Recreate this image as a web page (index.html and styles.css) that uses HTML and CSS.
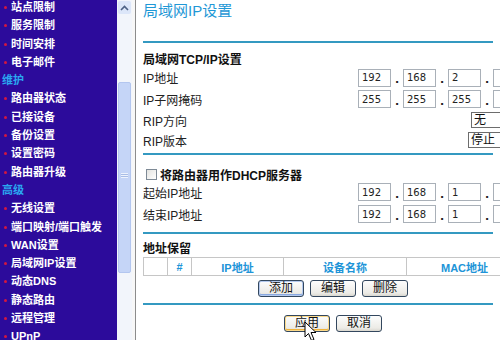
FILE: index.html
```html
<!DOCTYPE html>
<html lang="zh-CN">
  <head>
    <meta charset="UTF-8" />
    <title>局域网IP设置</title>
    <link rel="stylesheet" href="styles.css">
  </head>
  <body>
    <div class="frame">
      <div class="menu">
        <ul class="menu-list">
          <li class="item">站点限制</li>
          <li class="item">服务限制</li>
          <li class="item">时间安排</li>
          <li class="item">电子邮件</li>
          <li class="group">维护</li>
          <li class="item">路由器状态</li>
          <li class="item">已接设备</li>
          <li class="item">备份设置</li>
          <li class="item">设置密码</li>
          <li class="item">路由器升级</li>
          <li class="group">高级</li>
          <li class="item">无线设置</li>
          <li class="item">端口映射/端口触发</li>
          <li class="item">WAN设置</li>
          <li class="item">局域网IP设置</li>
          <li class="item">动态DNS</li>
          <li class="item">静态路由</li>
          <li class="item">远程管理</li>
          <li class="item">UPnP</li>
        </ul>
      </div>
      <div class="scrollbar">
        <div class="scroll-up">
          <svg width="9" height="6" viewBox="0 0 9 6"><path d="M1 5 L4.5 1.5 L8 5" fill="none" stroke="#4d6185" stroke-width="1.6"/></svg>
        </div>
        <div class="scroll-thumb"><span class="grip"></span></div>
      </div>
      <div class="divider"></div>
      <div class="content">
        <h1 class="title">局域网IP设置</h1>
        <div class="rule"></div>

        <div class="row section">局域网TCP/IP设置</div>
        <div class="row r-ip">
          <span class="label">IP地址</span>
          <span class="ip">
            <input class="octet" value="192"><span class="dot">.</span>
            <input class="octet" value="168"><span class="dot">.</span>
            <input class="octet" value="2"><span class="dot">.</span>
            <input class="octet octet-last" value="1">
          </span>
        </div>
        <div class="row r-mask">
          <span class="label">IP子网掩码</span>
          <span class="ip">
            <input class="octet" value="255"><span class="dot">.</span>
            <input class="octet" value="255"><span class="dot">.</span>
            <input class="octet" value="255"><span class="dot">.</span>
            <input class="octet octet-last" value="0">
          </span>
        </div>
        <div class="row r-sel">
          <span class="label">RIP方向</span>
          <span class="pick pick-dir">无</span>
        </div>
        <div class="row r-sel">
          <span class="label">RIP版本</span>
          <span class="pick pick-ver">停止</span>
        </div>
        <div class="rule rule-mid"></div>

        <div class="row r-check">
          <input type="checkbox" class="check">
          <span class="section">将路由器用作DHCP服务器</span>
        </div>
        <div class="row r-start">
          <span class="label">起始IP地址</span>
          <span class="ip">
            <input class="octet" value="192"><span class="dot">.</span>
            <input class="octet" value="168"><span class="dot">.</span>
            <input class="octet" value="1"><span class="dot">.</span>
            <input class="octet octet-last" value="2">
          </span>
        </div>
        <div class="row r-end">
          <span class="label">结束IP地址</span>
          <span class="ip">
            <input class="octet" value="192"><span class="dot">.</span>
            <input class="octet" value="168"><span class="dot">.</span>
            <input class="octet" value="1"><span class="dot">.</span>
            <input class="octet octet-last" value="51">
          </span>
        </div>
        <div class="rule rule-res"></div>

        <div class="row section r-res">地址保留</div>
        <table class="reserve">
          <tr>
            <th class="c-sel"></th>
            <th class="c-num">#</th>
            <th class="c-ip">IP地址</th>
            <th class="c-name">设备名称</th>
            <th class="c-mac">MAC地址</th>
          </tr>
        </table>
        <div class="buttons btn-edit">
          <button class="btn btn-default">添加</button>
          <button class="btn">编辑</button>
          <button class="btn">删除</button>
        </div>
        <div class="rule rule-end"></div>
        <div class="buttons btn-apply">
          <button class="btn btn-hover">应用</button>
          <button class="btn">取消</button>
        </div>
      </div>
    </div>
    <svg class="cursor" width="13" height="21" viewBox="0 0 13 21">
      <path d="M1 1 L1 16 L4.5 12.5 L7.5 19.5 L10 18.5 L7 11.5 L12 11.5 Z" fill="#fff" stroke="#000" stroke-width="1" stroke-linejoin="round"/>
    </svg>
  </body>
</html>
```

FILE: styles.css
```css
html,
body {
  margin: 0;
  overflow: hidden;
  width: 500px;
  height: 340px;
  background-color: #fff;
}
.frame {
  display: flex;
  height: 340px;
  overflow: hidden;
}
.menu {
  flex: none;
  width: 117px;
  background-color: #2c0b9b;
  overflow: hidden;
}
.menu-list {
  list-style: none;
  margin: -2px 0 0 0;
  padding: 0;
  font-family: "Liberation Sans", "Noto Sans CJK SC", sans-serif;
  font-size: 11px;
  font-weight: bold;
  line-height: 18.3px;
  white-space: nowrap;
}
.item {
  position: relative;
  padding-left: 11px;
  color: #fff;
}
.item::before {
  content: "";
  position: absolute;
  left: 4px;
  top: 8px;
  width: 3px;
  height: 3px;
  border-radius: 50%;
  background-color: #d4173f;
}
.group {
  padding-left: 2px;
  color: #2aa7f0;
}
.scrollbar {
  flex: none;
  width: 15px;
  display: flex;
  flex-direction: column;
  background-color: #f2f5fb;
}
.scroll-up {
  height: 13px;
  margin: 1px 1px 0;
  display: flex;
  align-items: center;
  justify-content: center;
  background-color: #dce6f9;
  border-radius: 2px;
}
.scroll-thumb {
  margin: 68px 1px 0;
  height: 191px;
  display: flex;
  align-items: center;
  justify-content: center;
  background-color: #c5d5f7;
  border: 1px solid #b3c6ef;
  border-radius: 2px;
  box-sizing: border-box;
}
.grip {
  width: 7px;
  height: 5px;
  margin-top: -4px;
  background: repeating-linear-gradient(#eef3fd 0 1px, #a9bde6 1px 2px);
}
.divider {
  flex: none;
  width: 3px;
  background-color: #f7f7f7;
  border-right: 1px solid #8c8c8c;
}
.content {
  flex: none;
  width: 380px;
  padding-left: 7px;
  font-family: "Liberation Sans", "Noto Sans CJK SC", sans-serif;
  font-size: 12px;
  color: #222;
}
.title {
  margin: 0;
  height: 41px;
  padding-top: 1px;
  box-sizing: border-box;
  font-size: 15px;
  font-weight: normal;
  line-height: 20px;
  color: #1f98d6;
}
.rule {
  width: 350px;
  height: 2px;
  background-color: #3499c1;
}
.rule-mid {
  margin-top: 3px;
}
.rule-res {
  margin-top: 8px;
}
.rule-end {
  margin-top: 6px;
}
.row {
  display: flex;
  align-items: center;
  white-space: nowrap;
}
.section {
  font-weight: bold;
  color: #111;
}
.row.section {
  margin-top: 6px;
  height: 18px;
}
.label {
  flex: none;
  width: 215px;
}
.r-ip {
  height: 21px;
}
.r-mask {
  height: 22px;
}
.r-sel {
  height: 20px;
}
.r-check {
  margin-top: 10px;
  height: 18px;
}
.r-start {
  height: 18px;
}
.r-end {
  margin-top: 3px;
  height: 20px;
}
.row.r-res {
  margin-top: 4px;
}
.ip {
  display: flex;
  align-items: center;
}
.octet {
  width: 33px;
  height: 18px;
  box-sizing: border-box;
  margin: 0;
  padding: 0 0 0 3px;
  border: 1px solid #a9b0b8;
  font-family: "DejaVu Sans", sans-serif;
  font-size: 10px;
  color: #222;
  background-color: #fff;
}
/* the last octet sits past the window edge, only its border shows */
.octet-last {
  padding-left: 10px;
}
.dot {
  width: 12px;
  text-align: center;
  font-family: "DejaVu Sans", sans-serif;
  font-size: 11px;
  font-weight: bold;
  padding-top: 4px;
}
.pick {
  height: 16px;
  width: 60px;
  box-sizing: border-box;
  padding-left: 2px;
  border: 1px solid #6d6d6d;
  line-height: 14px;
  font-size: 12px;
  color: #111;
}
.pick-dir {
  margin-left: 113px;
}
.pick-ver {
  margin-left: 110px;
}
.check {
  appearance: none;
  width: 11px;
  height: 11px;
  margin: 0 3px 0 3px;
  border: 1px solid #7e8a96;
  background: linear-gradient(135deg, #e3e3e0, #fff);
}
.reserve {
  margin-top: 1px;
  width: 380px;
  height: 19px;
  border-collapse: collapse;
  table-layout: fixed;
}
.reserve th {
  height: 17px;
  padding: 0;
  border: 1px solid #c6c6c6;
  font-size: 11px;
  font-weight: bold;
  color: #2094d8;
  text-align: center;
}
.c-sel,
.c-num {
  width: 23px;
}
.c-ip {
  width: 91px;
}
.c-name {
  width: 122px;
}
.buttons {
  display: flex;
  justify-content: center;
  gap: 6px;
}
.btn-edit {
  margin-top: 4px;
}
.btn-apply {
  margin-top: 10px;
}
.btn {
  width: 46px;
  height: 17px;
  padding: 0;
  border: 1px solid #33475e;
  border-radius: 3px;
  background: linear-gradient(#fdfdfd, #ecebe6 80%, #d9d7cf);
  font-family: "Liberation Sans", "Noto Sans CJK SC", sans-serif;
  font-size: 12px;
  line-height: 15px;
  color: #111;
}
.btn-default {
  box-shadow: inset 0 0 0 1px #b4c9ee, inset 0 -1px 0 1px #89a8e0;
}
.btn-hover {
  box-shadow: inset 0 0 0 1px #fbd98a, inset 0 -1px 0 1px #f0b33c;
}
.cursor {
  position: absolute;
  left: 304px;
  top: 321px;
}
```
